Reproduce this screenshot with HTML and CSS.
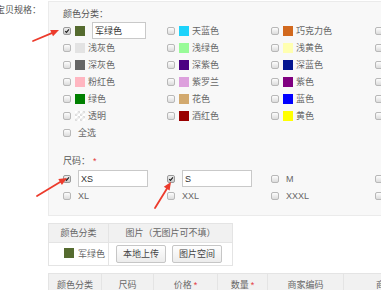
FILE: index.html
```html
<!DOCTYPE html>
<html lang="zh-CN">
  <head>
    <meta charset="UTF-8" />
    <meta name="viewport" content="width=device-width, initial-scale=1.0" />
    <title>宝贝规格</title>
    <link rel="stylesheet" href="styles.css">
  </head>
  <body>
    <div class="spec">
      <div class="spec-label">宝贝规格：</div>
      <div class="spec-body">
        <div class="panel">
          <div class="group-title">颜色分类：</div>
          <div class="opt-grid">
            <div class="opt"><span class="cb on"><svg viewBox="0 0 8 8"><path d="M1.6 4.2 L3.3 5.9 L6.6 1.8" /></svg></span><span class="sw" style="background:#556b2f"></span><input class="alias" value="军绿色"></div>
            <div class="opt"><span class="cb"></span><span class="sw" style="background:#1dd3fb"></span>天蓝色</div>
            <div class="opt"><span class="cb"></span><span class="sw" style="background:#d2691e"></span>巧克力色</div>
            <div class="opt"><span class="cb"></span><span class="sw" style="background:#ffa500"></span>桔色</div>

            <div class="opt"><span class="cb"></span><span class="sw" style="background:#e3e3e3"></span>浅灰色</div>
            <div class="opt"><span class="cb"></span><span class="sw" style="background:#98fb98"></span>浅绿色</div>
            <div class="opt"><span class="cb"></span><span class="sw" style="background:#ffffb1"></span>浅黄色</div>
            <div class="opt"><span class="cb"></span><span class="sw" style="background:#bdb76b"></span>深卡其布色</div>

            <div class="opt"><span class="cb"></span><span class="sw" style="background:#666666"></span>深灰色</div>
            <div class="opt"><span class="cb"></span><span class="sw" style="background:#4b0082"></span>深紫色</div>
            <div class="opt"><span class="cb"></span><span class="sw" style="background:#041690"></span>深蓝色</div>
            <div class="opt"><span class="cb"></span><span class="sw" style="background:#ffffff"></span>白色</div>

            <div class="opt"><span class="cb"></span><span class="sw" style="background:#ffb6c1"></span>粉红色</div>
            <div class="opt"><span class="cb"></span><span class="sw" style="background:#dda0dd"></span>紫罗兰</div>
            <div class="opt"><span class="cb"></span><span class="sw" style="background:#800080"></span>紫色</div>
            <div class="opt"><span class="cb"></span><span class="sw" style="background:#ff0000"></span>红色</div>

            <div class="opt"><span class="cb"></span><span class="sw" style="background:#008000"></span>绿色</div>
            <div class="opt"><span class="cb"></span><span class="sw" style="background:#d2a96e"></span>花色</div>
            <div class="opt"><span class="cb"></span><span class="sw" style="background:#0000ff"></span>蓝色</div>
            <div class="opt"><span class="cb"></span><span class="sw" style="background:#855b00"></span>褐色</div>

            <div class="opt"><span class="cb"></span><span class="sw clear"></span>透明</div>
            <div class="opt"><span class="cb"></span><span class="sw" style="background:#990000"></span>酒红色</div>
            <div class="opt"><span class="cb"></span><span class="sw" style="background:#ffff00"></span>黄色</div>
            <div class="opt"><span class="cb"></span><span class="sw" style="background:#000000"></span>黑色</div>

            <div class="opt all"><span class="cb"></span>全选</div>
          </div>

          <div class="group-title size-title">尺码：<em>*</em></div>
          <div class="opt-grid sizes">
            <div class="opt"><span class="cb on"><svg viewBox="0 0 8 8"><path d="M1.6 4.2 L3.3 5.9 L6.6 1.8" /></svg></span><input class="alias wide" value="XS"></div>
            <div class="opt"><span class="cb on"><svg viewBox="0 0 8 8"><path d="M1.6 4.2 L3.3 5.9 L6.6 1.8" /></svg></span><input class="alias wide" value="S"></div>
            <div class="opt"><span class="cb"></span>M</div>
            <div class="opt"><span class="cb"></span>L</div>
            <div class="opt"><span class="cb"></span>XL</div>
            <div class="opt"><span class="cb"></span>XXL</div>
            <div class="opt"><span class="cb"></span>XXXL</div>
            <div class="opt"><span class="cb"></span>均码</div>
          </div>
        </div>

        <table class="pic-table">
          <tr>
            <th class="c-color">颜色分类</th>
            <th>图片（无图片可不填）</th>
          </tr>
          <tr>
            <td class="c-color"><span class="sw" style="background:#556b2f"></span>军绿色</td>
            <td class="c-btns"><button class="btn">本地上传</button><button class="btn">图片空间</button></td>
          </tr>
        </table>

        <table class="sku-table">
          <tr>
            <th class="w1">颜色分类</th>
            <th class="w2">尺码</th>
            <th class="w3">价格<em>*</em></th>
            <th class="w4">数量<em>*</em></th>
            <th class="w5">商家编码</th>
            <th class="w6">商品条形码</th>
          </tr>
        </table>
      </div>
    </div>

    <svg class="arrows" width="381" height="290" viewBox="0 0 381 290">
      <line x1="33" y1="41" x2="53" y2="32.6" />
      <polygon points="59,30 53.0,36.3 50.2,29.9" />
      <line x1="37" y1="196" x2="61" y2="181.6" />
      <polygon points="67,178 61.9,185.1 58.3,179.1" />
      <line x1="155" y1="208" x2="167" y2="188.5" />
      <polygon points="171,182 169.6,190.6 163.8,186.8" />
    </svg>
  </body>
</html>
```

FILE: styles.css
```css
* {
  margin: 0;
  padding: 0;
  box-sizing: border-box;
}
html,
body {
  overflow: hidden;
}
body {
  width: 381px;
  height: 290px;
  position: relative;
  background: #fff;
  color: #666;
  font-family: "Liberation Sans", "Noto Sans CJK SC", sans-serif;
  font-size: 9px;
  line-height: 12px;
}
.spec {
  display: flex;
  padding-top: 1px;
}
.spec-label {
  width: 52px;
  margin-left: -4px;
  padding-top: 3px;
  flex-shrink: 0;
  color: #555;
}
.spec-body {
  width: 440px;
  flex-shrink: 0;
}
.panel {
  background: #f8f8f8;
  border: 1px solid #ebebeb;
  padding: 6px 0 11px 14px;
}
.group-title {
  color: #555;
  margin-bottom: 2px;
}
.group-title em {
  color: #e4393c;
  font-style: normal;
  margin-left: 3px;
}
.size-title {
  margin-top: 14px;
  margin-bottom: 3px;
}
.opt-grid {
  display: grid;
  grid-template-columns: repeat(4, 104px);
}
.opt {
  display: flex;
  align-items: center;
  height: 17px;
  white-space: nowrap;
}
.cb {
  width: 8px;
  height: 8px;
  border: 1px solid #b8b8b8;
  border-radius: 2px;
  background: linear-gradient(#fdfdfd, #dcdcdc);
  margin-right: 4px;
  flex-shrink: 0;
  display: flex;
}
.cb.on {
  background: linear-gradient(#eeeeee, #c9c9c9);
  border-color: #9a9a9a;
}
.cb svg {
  width: 100%;
  height: 100%;
  fill: none;
  stroke: #1e1e1e;
  stroke-width: 1.5;
}
.sw {
  display: inline-block;
  width: 10px;
  height: 10px;
  margin-right: 3px;
  flex-shrink: 0;
}
.sw.clear {
  background-color: #fff;
  background-image: linear-gradient(45deg, #ddd 25%, transparent 25%, transparent 75%, #ddd 75%),
    linear-gradient(45deg, #ddd 25%, transparent 25%, transparent 75%, #ddd 75%);
  background-size: 5px 5px;
  background-position: 0 0, 2.5px 2.5px;
}
.opt.all .cb,
.sizes .cb {
  margin-right: 7px;
}
.alias {
  width: 54px;
  height: 17px;
  margin-left: 4px;
  border: 1px solid #c9c9c9;
  background: #fff;
  padding: 0 2px;
  font: inherit;
  color: #333;
  outline: none;
}
.alias.wide {
  width: 70px;
  margin-left: 0;
}

table {
  border-collapse: collapse;
  font-size: 9px;
}
th,
td {
  border: 1px solid #e4e4e4;
  font-weight: normal;
  color: #666;
}
th {
  background: #f1f1f1;
  text-align: center;
}
.pic-table {
  width: 185px;
  margin-top: 7px;
}
.pic-table th {
  height: 19px;
}
.pic-table td {
  height: 23px;
  background: #fff;
}
.pic-table .c-color {
  width: 60px;
}
.pic-table td.c-color {
  padding-left: 15px;
  white-space: nowrap;
}
.pic-table td.c-color .sw {
  vertical-align: -1px;
  margin-right: 4px;
}
.c-btns {
  padding-left: 7px;
}
.btn {
  width: 50px;
  height: 18px;
  margin-right: 6px;
  border: 1px solid #c6c6c6;
  border-radius: 2px;
  background: linear-gradient(#fefefe, #ececec);
  font: inherit;
  color: #444;
  vertical-align: middle;
}
.sku-table {
  margin-top: 7px;
}
.sku-table th {
  height: 23px;
}
.sku-table em {
  color: #e4393c;
  font-style: normal;
  margin-left: 2px;
}
.w1 { width: 53px; }
.w2 { width: 52px; }
.w3 { width: 64px; }
.w4 { width: 50px; }
.w5 { width: 76px; }
.w6 { width: 110px; }

.arrows {
  position: absolute;
  left: 0;
  top: 0;
  pointer-events: none;
}
.arrows line {
  stroke: #ec3b2c;
  stroke-width: 1.8;
  stroke-linecap: round;
}
.arrows polygon {
  fill: #ec3b2c;
}
```
